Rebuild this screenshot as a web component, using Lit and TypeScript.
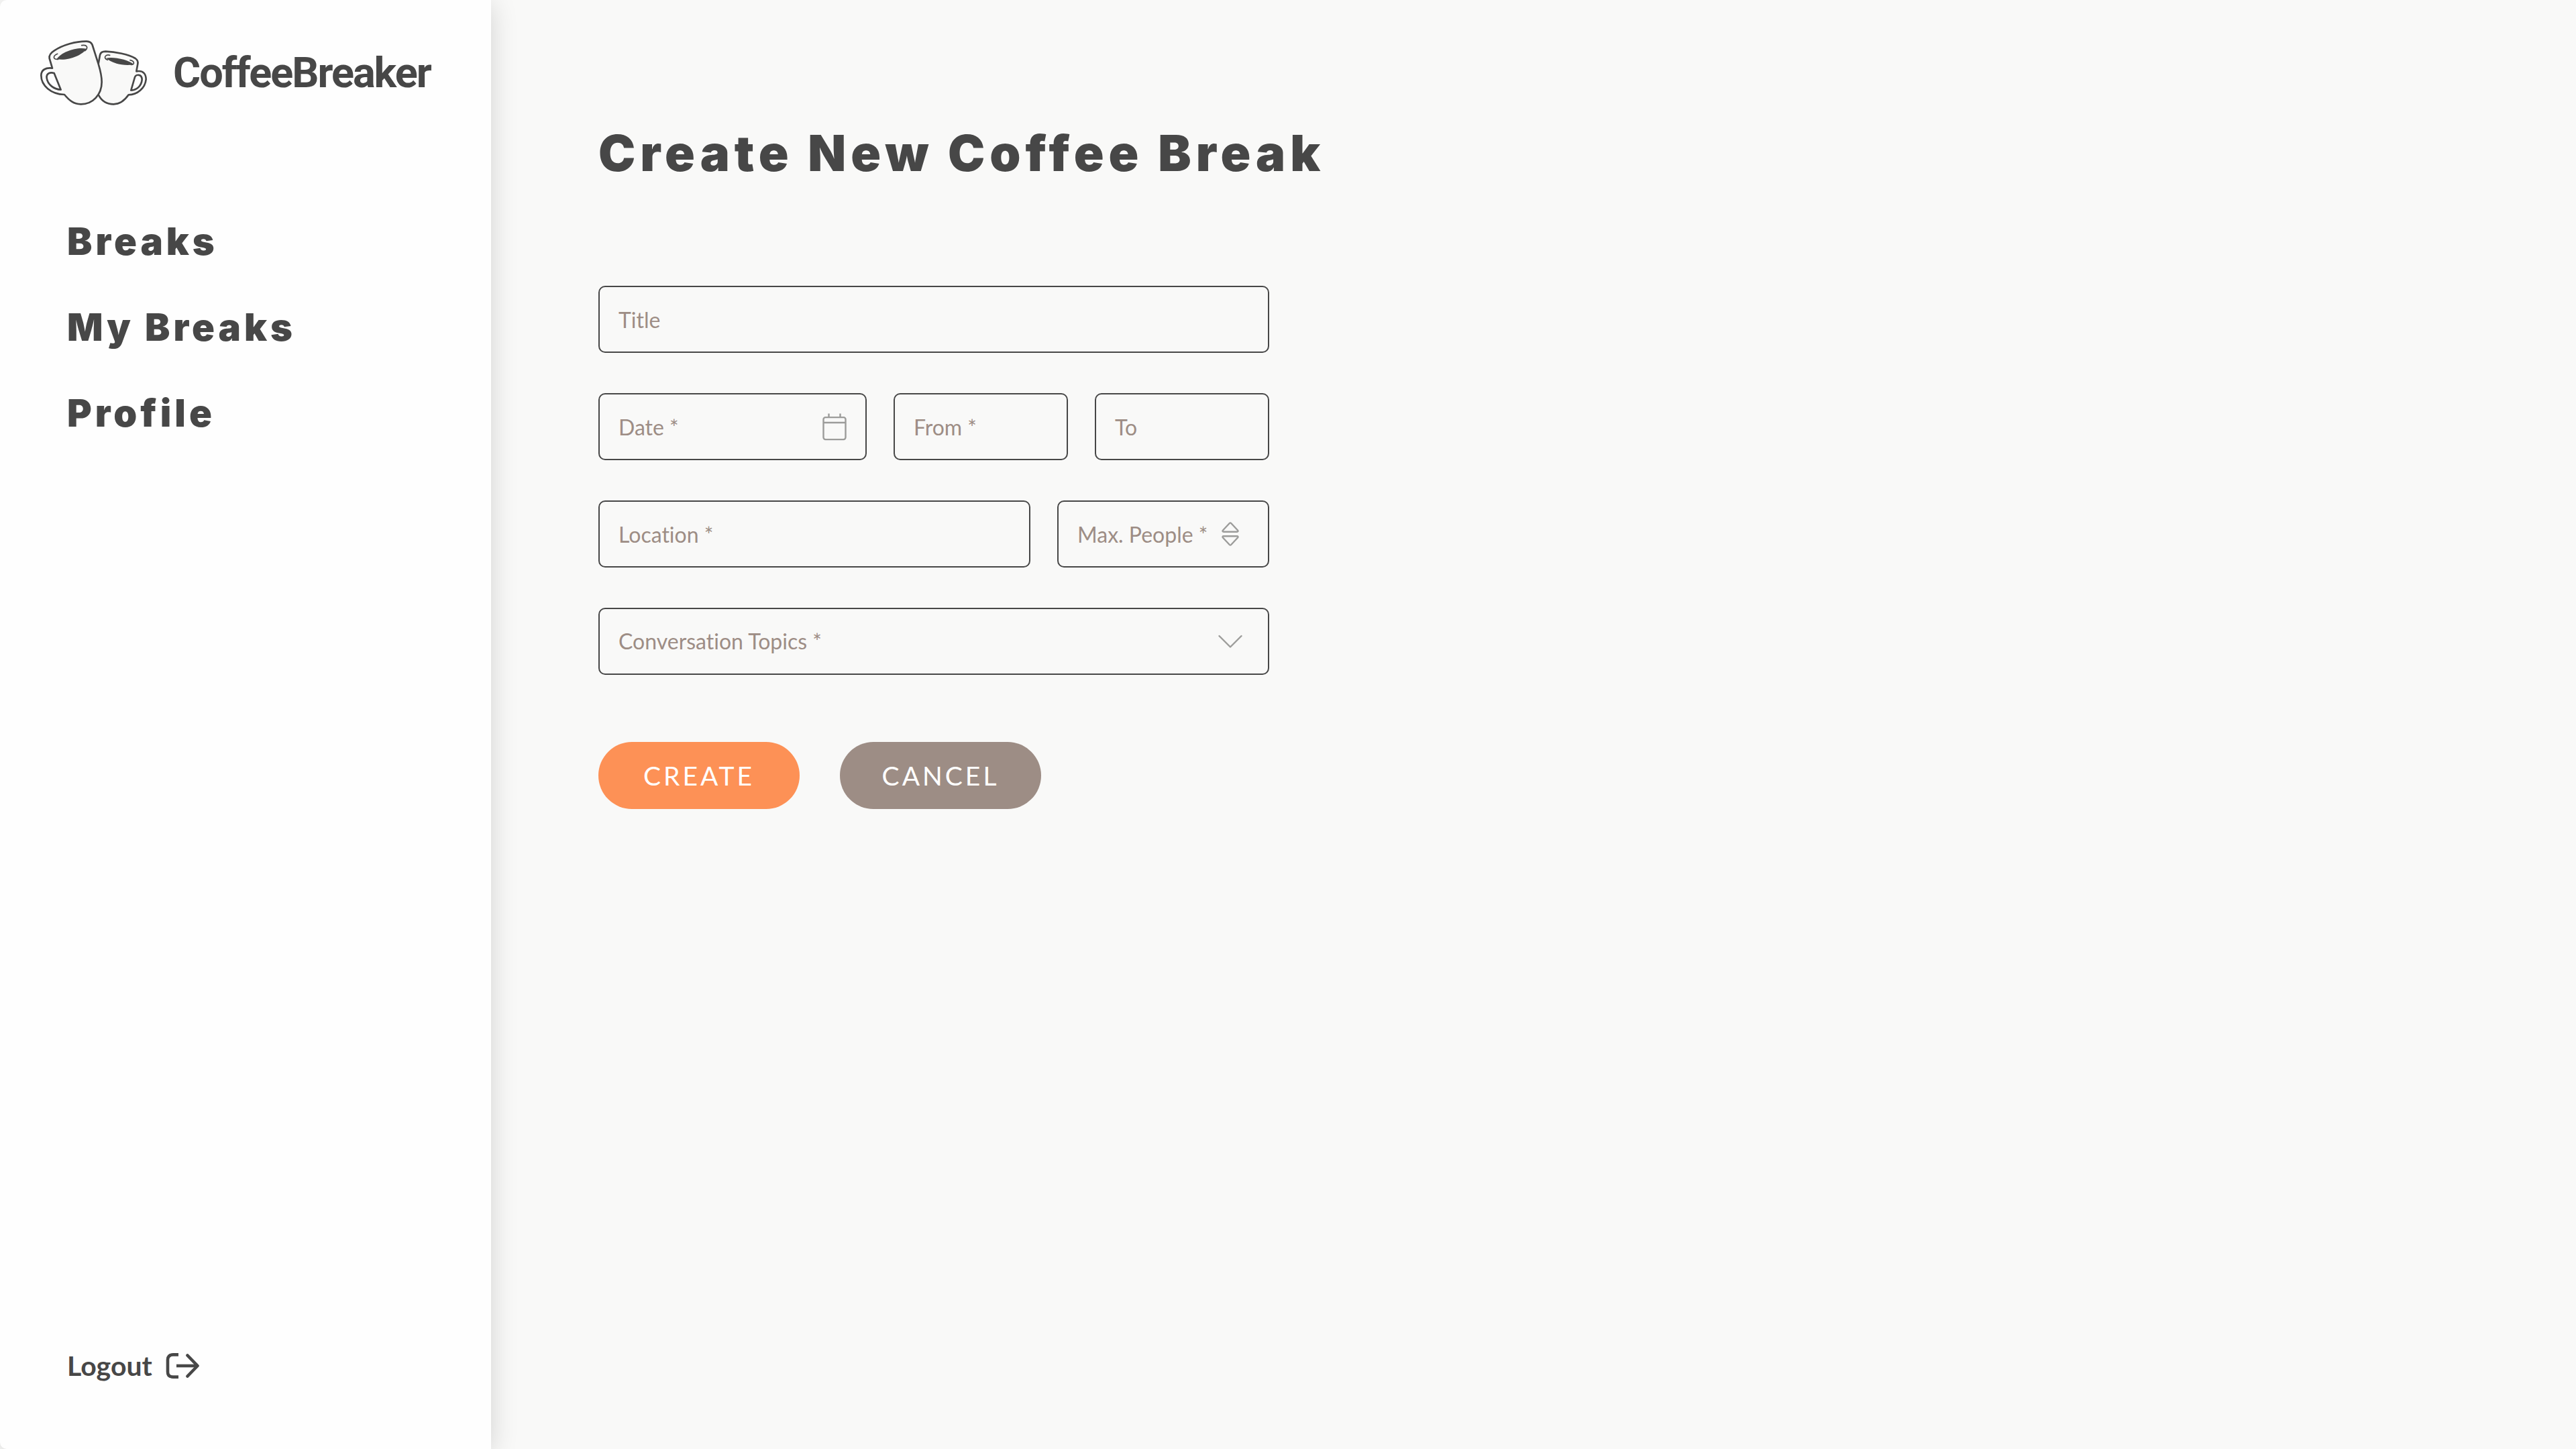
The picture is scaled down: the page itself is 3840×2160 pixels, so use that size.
import { LitElement, html, css, svg } from "lit";
import { customElement } from "lit/decorators.js";

const cups = html`<svg class="cups" viewBox="30 59 480 294" aria-hidden="true">
  ${svg`
  <g fill="none" stroke="#474747" stroke-width="8" stroke-linejoin="round" stroke-linecap="round">
    <path fill="#f9f9f8" stroke="none" d="M290 165L297 125C300 112 308 109 322 109C366 110 425 122 455 140C466 147 468 155 466 165L460 198L425 303C405 332 386 345 358 345C325 345 305 330 292 306Z"/>
    <path d="M290 165L297 125C300 112 308 109 322 109C366 110 425 122 455 140C466 147 468 155 466 165L460 198C492 192 503 212 503 234C499 272 466 303 425 303C405 332 386 345 358 345C325 345 305 330 292 306"/>
    <path d="M436 283L453 224C457 211 485 208 485 236C482 262 464 281 436 283Z"/>
    <path fill="#f9f9f8" stroke="none" d="M84 184L71 140C69 128 76 116 92 106C130 80 190 63 238 64C252 65 259 69 263 80L290 165C300 198 305 222 305 246C305 302 265 345 212 345C178 345 158 326 138 302Z"/>
    <path d="M84 184L71 140C69 128 76 116 92 106C130 80 190 63 238 64C252 65 259 69 263 80L290 165C300 198 305 222 305 246C305 302 265 345 212 345C178 345 158 326 138 302C78 300 34 262 34 216C34 192 54 180 84 184Z"/>
    <path d="M122 280L92 206C76 201 56 206 59 228C63 256 90 279 122 280Z"/>
    <g stroke-width="5">
      <path d="M215 82C240 77 246 92 230 106"/>
      <path d="M107 120C87 128 84 146 110 144"/>
      <path d="M341 126C322 121 309 138 331 147"/>
      <path d="M432 148C452 152 454 169 436 168"/>
    </g>
  </g>
  <path fill="#474747" d="M104 143C124 112 190 88 237 97C216 128 150 153 104 143Z"/>
  <path fill="#474747" d="M325 139C360 132 424 146 448 167C408 176 352 163 325 139Z"/>`}
</svg>`;

const logoutIcon = html`<svg class="exit" viewBox="0 0 50 40" aria-hidden="true">
  ${svg`<g fill="none" stroke="currentColor" stroke-width="4.6" stroke-linejoin="round">
    <path d="M19 3.4H11C5.500 3.400 3 6 3 11V29C3 34 5.500 36.600 11 36.600H19"/>
    <path d="M16 20H46"/><path stroke-linecap="round" d="M32.500 4.500L47.500 20L32.500 35.500"/>
  </g>`}
</svg>`;

const calendarIcon = html`<svg class="icon" viewBox="0 0 36 42" aria-hidden="true">
  ${svg`<g fill="none" stroke="currentColor" stroke-width="2.400">
    <rect x="1.500" y="7.100" width="33" height="33" rx="3"/>
    <path d="M1.500 15H34.500M9.500 1.500V7M26.500 1.500V7"/>
  </g>`}
</svg>`;

const stepperIcon = html`<svg class="icon" viewBox="0 0 36 36" aria-hidden="true">
  ${svg`<g fill="none" stroke="currentColor" stroke-width="2.400" stroke-linejoin="round">
    <path d="M16.800 2L7 12.500C6 13.800 6.500 14.700 8 14.700H28C29.500 14.700 30 13.800 29 12.500L19.200 2Q18 .8 16.800 2Z"/>
    <path d="M16.800 34L7 23.500C6 22.200 6.500 21.300 8 21.300H28C29.500 21.300 30 22.200 29 23.500L19.200 34Q18 35.200 16.800 34Z"/>
  </g>`}
</svg>`;

const chevronIcon = html`<svg class="icon" viewBox="0 0 36 20" aria-hidden="true">
  ${svg`<path d="M1.500 2L18 18.500L34.500 2" fill="none" stroke="currentColor" stroke-width="2.400" stroke-linecap="round" stroke-linejoin="round"/>`}
</svg>`;

@customElement("app-root")
export class AppRoot extends LitElement {
  static styles = css`
    :host {
      display: block;
      color: #474747;
      background: #f9f9f8;
      font-family: Lato, "Open Sans", sans-serif;
    }
    * {
      box-sizing: border-box;
    }
    .page {
      display: flex;
      min-height: 100vh;
    }
    .sidebar {
      flex: 0 0 732px;
      display: flex;
      flex-direction: column;
      padding: 60px 60px 100px;
      background: #fefefe;
      border-radius: 10px 0 0 10px;
      box-shadow: 0 6px 40px rgba(0, 0, 0, 0.16);
    }
    a {
      color: inherit;
      text-decoration: none;
    }
    .brand {
      display: flex;
      align-items: center;
      gap: 38px;
      font: 700 63px/64px Roboto, sans-serif;
      letter-spacing: -2px;
    }
    .cups {
      width: 160px;
      height: 98px;
    }
    .nav {
      display: flex;
      flex-direction: column;
      align-items: flex-start;
      gap: 64px;
      margin-top: 170px;
      padding-left: 40px;
      font: 900 56px/64px Inter, sans-serif;
      letter-spacing: 5px;
    }
    .logout {
      display: flex;
      align-items: center;
      align-self: flex-start;
      gap: 20px;
      margin-top: auto;
      padding: 0 0 0 40px;
      border: 0;
      background: none;
      color: inherit;
      font: 700 41px/48px Lato, sans-serif;
      cursor: pointer;
    }
    .exit {
      width: 50px;
      height: 40px;
    }
    .main {
      flex: 1;
      min-width: 0;
      padding: 188px 160px 100px;
    }
    .title {
      margin: 0 0 158px;
      font: 900 74px/80px Inter, sans-serif;
      letter-spacing: 7px;
    }
    .form {
      display: grid;
      gap: 60px;
      max-width: 1000px;
    }
    .row {
      display: grid;
      gap: 40px;
    }
    .when {
      grid-template-columns: 20fr 13fr 13fr;
    }
    .where {
      grid-template-columns: 1fr 316px;
    }
    .field {
      display: flex;
      align-items: center;
      min-width: 0;
      height: 100px;
      padding: 0 28px;
      border: 2px solid #474747;
      border-radius: 10px;
      color: #9c9c9a;
    }
    .narrow-icon {
      padding-right: 38px;
    }
    .control {
      flex: 1;
      min-width: 0;
      width: 100%;
      height: 100%;
      padding: 0;
      border: 0;
      outline: 0;
      background: none;
      color: #9d8d85;
      font: 400 32px/40px Lato, sans-serif;
      font-variant-ligatures: none;
      appearance: none;
    }
    .control::placeholder {
      color: #9d8d85;
      opacity: 1;
    }
    .field:focus-within {
      border-color: #fd9156;
    }
    .icon {
      flex: none;
      width: 36px;
    }
    .actions {
      display: flex;
      gap: 60px;
      margin-top: 40px;
    }
    .button {
      width: 300px;
      height: 100px;
      border: 0;
      border-radius: 50px;
      background: #9d8d85;
      color: #fff;
      font: 400 39px/48px Lato, sans-serif;
      letter-spacing: 4px;
      cursor: pointer;
    }
    .primary {
      background: #fd9156;
    }
  `;

  render() {
    return html`
      <div class="page">
        <aside class="sidebar">
          <a class="brand" href="#home">${cups}<span>CoffeeBreaker</span></a>
          <nav class="nav">
            <a href="#breaks">Breaks</a>
            <a href="#my-breaks">My Breaks</a>
            <a href="#profile">Profile</a>
          </nav>
          <button class="logout" type="button"><span>Logout</span>${logoutIcon}</button>
        </aside>
        <main class="main">
          <h1 class="title">Create New Coffee Break</h1>
          <form class="form" @submit=${(e: Event) => e.preventDefault()}>
            <label class="field">
              <input class="control" type="text" placeholder="Title" aria-label="Title" />
            </label>
            <div class="row when">
              <label class="field">
                <input class="control" type="text" placeholder="Date *" aria-label="Date" required />
                ${calendarIcon}
              </label>
              <label class="field">
                <input class="control" type="text" placeholder="From *" aria-label="From" required />
              </label>
              <label class="field">
                <input class="control" type="text" placeholder="To" aria-label="To" />
              </label>
            </div>
            <div class="row where">
              <label class="field">
                <input class="control" type="text" placeholder="Location *" aria-label="Location" required />
              </label>
              <label class="field narrow-icon">
                <input class="control" type="text" inputmode="numeric" placeholder="Max. People *" aria-label="Max. People" required />
                ${stepperIcon}
              </label>
            </div>
            <label class="field narrow-icon">
              <select class="control" aria-label="Conversation Topics" required>
                <option value="">Conversation Topics *</option>
              </select>
              ${chevronIcon}
            </label>
            <div class="actions">
              <button class="button primary" type="submit">CREATE</button>
              <button class="button" type="button">CANCEL</button>
            </div>
          </form>
        </main>
      </div>
    `;
  }
}
